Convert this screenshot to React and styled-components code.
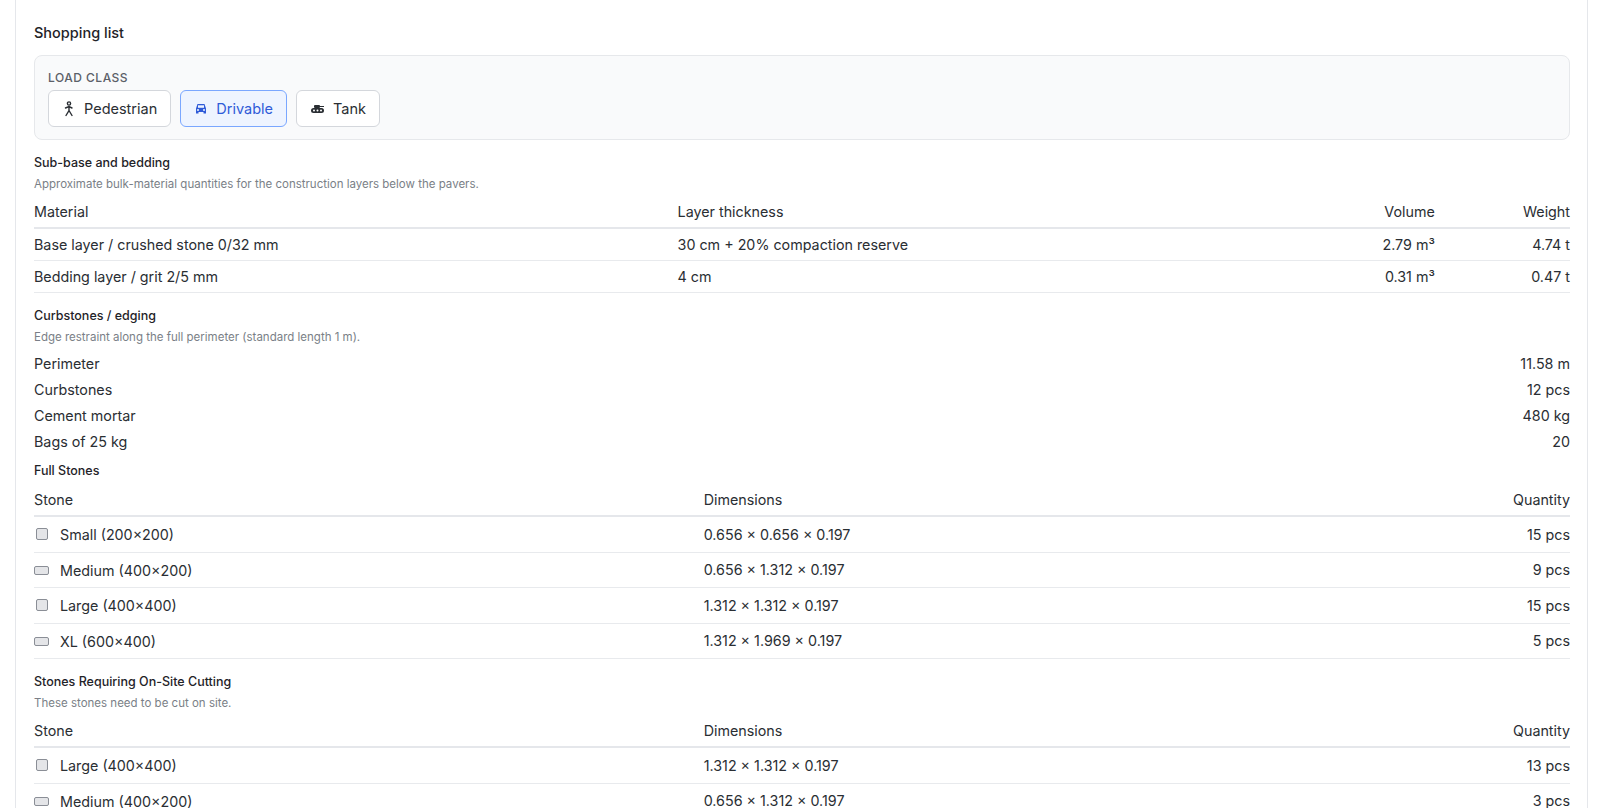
import React from "react";
import styled, { createGlobalStyle } from "styled-components";

const G = createGlobalStyle`
  body{margin:0;background:#fff;font-family:Inter,"Noto Sans",sans-serif;color:#1f2328;}
`;
const Page = styled.div`padding:0 12px 0 15px;`;
const Card = styled.div`border:1px solid #e5e7eb;border-top:none;border-radius:0 0 8px 8px;padding:24px 17px 0 18px;min-height:808px;box-sizing:border-box;`;
const Title = styled.h2`margin:0 0 14px;font-size:14.5px;font-weight:500;color:#1f2328;`;
const LoadBox = styled.div`background:#f9fafb;border:1px solid #e6e8eb;border-radius:8px;padding:14px 13px 12px;`;
const LoadLabel = styled.div`font-size:12px;font-weight:500;letter-spacing:0.5px;color:#5b6068;margin-bottom:5px;`;
const Btns = styled.div`display:flex;gap:9px;`;
const Btn = styled.button`
  display:flex;align-items:center;gap:8px;height:37px;padding:0 13px;border-radius:6px;
  font:400 14.5px Inter,sans-serif;cursor:pointer;
  border:1px solid ${p=>p.$active?"#7aa7ff":"#d4d7dc"};
  background:${p=>p.$active?"#eef4ff":"#fff"};
  color:${p=>p.$active?"#2f5bd8":"#2a2e33"};
`;
const SecTitle = styled.div`font-size:12.5px;font-weight:500;color:#1f2328;margin-top:${p=>p.$mt||14}px;`;
const Desc = styled.div`font-size:11.5px;color:#7a7f87;margin-top:7px;`;
const Table = styled.table`width:100%;border-collapse:collapse;margin-top:${p=>p.$mt||6}px;font-size:14.3px;color:#2a2e33;`;
const Th = styled.th`font-weight:400;text-align:${p=>p.$r?"right":"left"};height:31px;border-bottom:2px solid #e5e7eb;padding:0;width:${p=>p.$w||"auto"};`;
const Td = styled.td`text-align:${p=>p.$r?"right":"left"};height:${p=>p.$h||30}px;border-bottom:1px solid #e8eaed;padding:0;`;
const KV = styled.div`display:flex;justify-content:space-between;font-size:14.3px;color:#2a2e33;height:26px;align-items:center;`;
const KVs = styled.div`margin-top:6px;`;
const Cell = styled.span`display:inline-flex;align-items:center;gap:11px;`;
const Swatch = styled.span`display:inline-block;box-sizing:border-box;width:${p=>p.$wide?15:12}px;height:${p=>p.$wide?9:12}px;margin-left:${p=>p.$wide?0:2}px;margin-right:${p=>p.$wide?0:1}px;background:#e4e5e8;border:1px solid #8a8e96;border-radius:2px;`;

const Ped = () => (<svg width="14" height="16" viewBox="0 0 14 16" fill="none" stroke="#2a2e33" strokeWidth="1.4" strokeLinecap="round"><circle cx="7" cy="2.5" r="1.6"/><path d="M3.5 7l3.5-1.5 3 1.5M7 5.5v4l-3 5M7 9.5l3 5"/></svg>);
const Car = () => (<svg width="14" height="14" viewBox="0 0 14 14" fill="#2f5bd8"><path d="M3.5 2h7l1.5 4.5v5h-2.5v-1.5h-5v1.5H2v-5z"/><rect x="4" y="3.3" width="6" height="2.5" fill="#eef4ff"/><circle cx="4" cy="8" r="1" fill="#eef4ff"/><circle cx="10" cy="8" r="1" fill="#eef4ff"/></svg>);
const Tank = () => (<svg width="15" height="12" viewBox="0 0 15 12" fill="#2a2e33"><rect x="4" y="2" width="6" height="3" rx="1"/><rect x="9" y="3" width="5" height="1"/><rect x="1" y="5" width="13" height="5" rx="2.5"/><circle cx="4" cy="7.5" r="1" fill="#fff"/><circle cx="7.5" cy="7.5" r="1" fill="#fff"/><circle cx="11" cy="7.5" r="1" fill="#fff"/></svg>);

const stones1 = [["Small (200×200)",0,"0.656 × 0.656 × 0.197","15 pcs"],["Medium (400×200)",1,"0.656 × 1.312 × 0.197","9 pcs"],["Large (400×400)",0,"1.312 × 1.312 × 0.197","15 pcs"],["XL (600×400)",1,"1.312 × 1.969 × 0.197","5 pcs"]];
const stones2 = [["Large (400×400)",0,"1.312 × 1.312 × 0.197","13 pcs"],["Medium (400×200)",1,"0.656 × 1.312 × 0.197","3 pcs"]];

const StoneTable = ({rows, mt}) => (
  <Table $mt={mt}><thead><tr><Th $w="43.6%">Stone</Th><Th>Dimensions</Th><Th $r>Quantity</Th></tr></thead>
  <tbody>{rows.map((r,i)=>(<tr key={i}><Td $h={34.5}><Cell><Swatch $wide={r[1]}/>{r[0]}</Cell></Td><Td $h={34.5}>{r[2]}</Td><Td $h={34.5} $r>{r[3]}</Td></tr>))}</tbody></Table>
);

export default function App(){
  return (<Page><G/><Card>
    <Title>Shopping list</Title>
    <LoadBox><LoadLabel>LOAD CLASS</LoadLabel>
      <Btns><Btn><Ped/>Pedestrian</Btn><Btn $active><Car/>Drivable</Btn><Btn><Tank/>Tank</Btn></Btns>
    </LoadBox>
    <SecTitle $mt={15}>Sub-base and bedding</SecTitle>
    <Desc>Approximate bulk-material quantities for the construction layers below the pavers.</Desc>
    <Table $mt={5}><thead><tr><Th $w="41.9%">Material</Th><Th>Layer thickness</Th><Th $r>Volume</Th><Th $r $w="8.8%">Weight</Th></tr></thead>
      <tbody>
        <tr><Td $h={31}>Base layer / crushed stone 0/32 mm</Td><Td $h={31}>30 cm + 20% compaction reserve</Td><Td $h={31} $r>2.79 m³</Td><Td $h={31} $r>4.74 t</Td></tr>
        <tr><Td $h={31}>Bedding layer / grit 2/5 mm</Td><Td $h={31}>4 cm</Td><Td $h={31} $r>0.31 m³</Td><Td $h={31} $r>0.47 t</Td></tr>
      </tbody></Table>
    <SecTitle $mt={15}>Curbstones / edging</SecTitle>
    <Desc>Edge restraint along the full perimeter (standard length 1 m).</Desc>
    <KVs><KV><span>Perimeter</span><span>11.58 m</span></KV><KV><span>Curbstones</span><span>12 pcs</span></KV><KV><span>Cement mortar</span><span>480 kg</span></KV><KV><span>Bags of 25 kg</span><span>20</span></KV></KVs>
    <SecTitle $mt={9}>Full Stones</SecTitle>
    <StoneTable rows={stones1} mt={6}/>
    <SecTitle $mt={15}>Stones Requiring On-Site Cutting</SecTitle>
    <Desc>These stones need to be cut on site.</Desc>
    <StoneTable rows={stones2} mt={5}/>
  </Card></Page>);
}
